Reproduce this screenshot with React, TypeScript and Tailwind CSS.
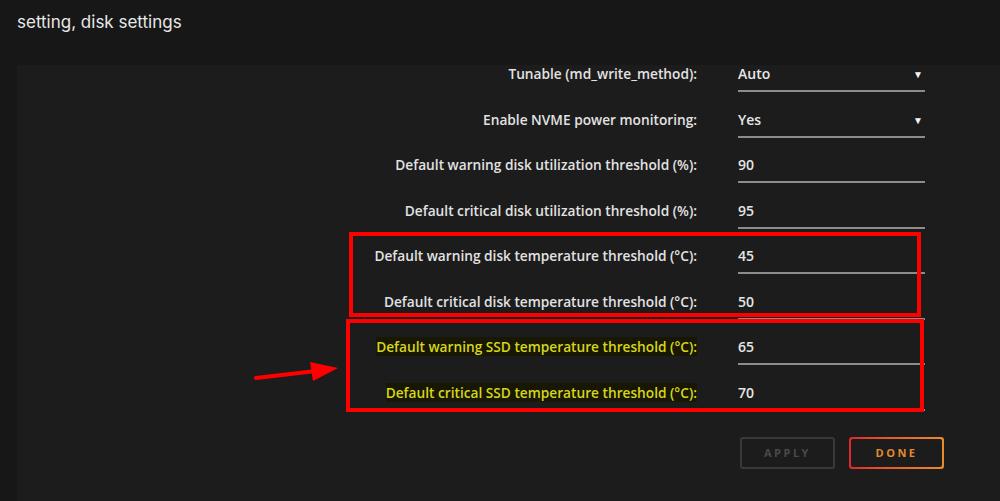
import React from "react";

type Row = {
  label: string;
  value: string;
  select?: boolean;
  ssd?: boolean;
};

const rows: Row[] = [
  { label: "Tunable (md_write_method):", value: "Auto", select: true },
  { label: "Enable NVME power monitoring:", value: "Yes", select: true },
  { label: "Default warning disk utilization threshold (%):", value: "90" },
  { label: "Default critical disk utilization threshold (%):", value: "95" },
  { label: "Default warning disk temperature threshold (°C):", value: "45" },
  { label: "Default critical disk temperature threshold (°C):", value: "50" },
  { label: "Default warning SSD temperature threshold (°C):", value: "65", ssd: true },
  { label: "Default critical SSD temperature threshold (°C):", value: "70", ssd: true },
];

export default function App() {
  return (
    <div
      className="relative w-[1000px] h-[501px] overflow-hidden bg-[#171717] text-[#e4e4e4]"
      style={{ fontFamily: "'Open Sans', 'Liberation Sans', sans-serif" }}
    >
      {/* Title bar */}
      <div className="h-[65px] px-[17px] pt-[10px]">
        <h1 className="text-[17px] leading-[24px] text-[#e8e8e8]" style={{ fontFamily: "Inter, 'Open Sans', sans-serif" }}>
          setting, disk settings
        </h1>
      </div>

      {/* Panel */}
      <div className="ml-[17px] h-[436px] bg-[#1c1c1c]">
        {rows.map((r) => (
          <div key={r.label} className="flex items-start h-[45.5px]">
            <div className="w-[680px] text-right text-[13.7px] leading-[18px] font-semibold">
              {r.ssd ? (
                <span className="bg-[#171703] text-[#d6d61c]">{r.label}</span>
              ) : (
                <span className="text-[#e2e2e2]">{r.label}</span>
              )}
            </div>
            <div className="ml-[41px] w-[187px] h-[27px] border-b-2 border-[#8c8c8c] flex items-start justify-between pr-[2px]">
              <span className="text-[14px] leading-[18px] font-semibold text-[#e6e6e6]">{r.value}</span>
              {r.select && <span className="text-[10px] leading-[18px] text-[#f4f4f4]">▼</span>}
            </div>
          </div>
        ))}

        {/* Buttons */}
        <div className="flex gap-[14px] pl-[723px] pt-[8px]">
          <button className="w-[95px] h-[32px] rounded-[3px] border-2 border-[#393939] text-[11px] font-bold tracking-[2.5px] text-[#4a4a4a]">
            APPLY
          </button>
          <div className="w-[95px] h-[32px] rounded-[3px] p-[2px] bg-gradient-to-r from-[#e0262a] to-[#e88c2a]">
            <button className="w-full h-full rounded-[2px] bg-[#1c1c1c] text-[11px] font-bold tracking-[2.5px] text-[#e4892e]">
              DONE
            </button>
          </div>
        </div>
      </div>

      {/* Annotations */}
      <div className="absolute left-[349px] top-[232px] w-[572px] h-[85px] border-4 border-[#ff0000]" />
      <div className="absolute left-[346px] top-[319px] w-[578px] h-[93px] border-4 border-[#ff0000]" />
      <svg className="absolute left-[250px] top-[355px]" width="95" height="35" viewBox="250 355 95 35">
        <line x1="256" y1="378" x2="316" y2="371" stroke="#ff0000" strokeWidth="4" strokeLinecap="round" />
        <polygon points="310,362 338,368 313,381" fill="#ff0000" />
      </svg>
    </div>
  );
}
